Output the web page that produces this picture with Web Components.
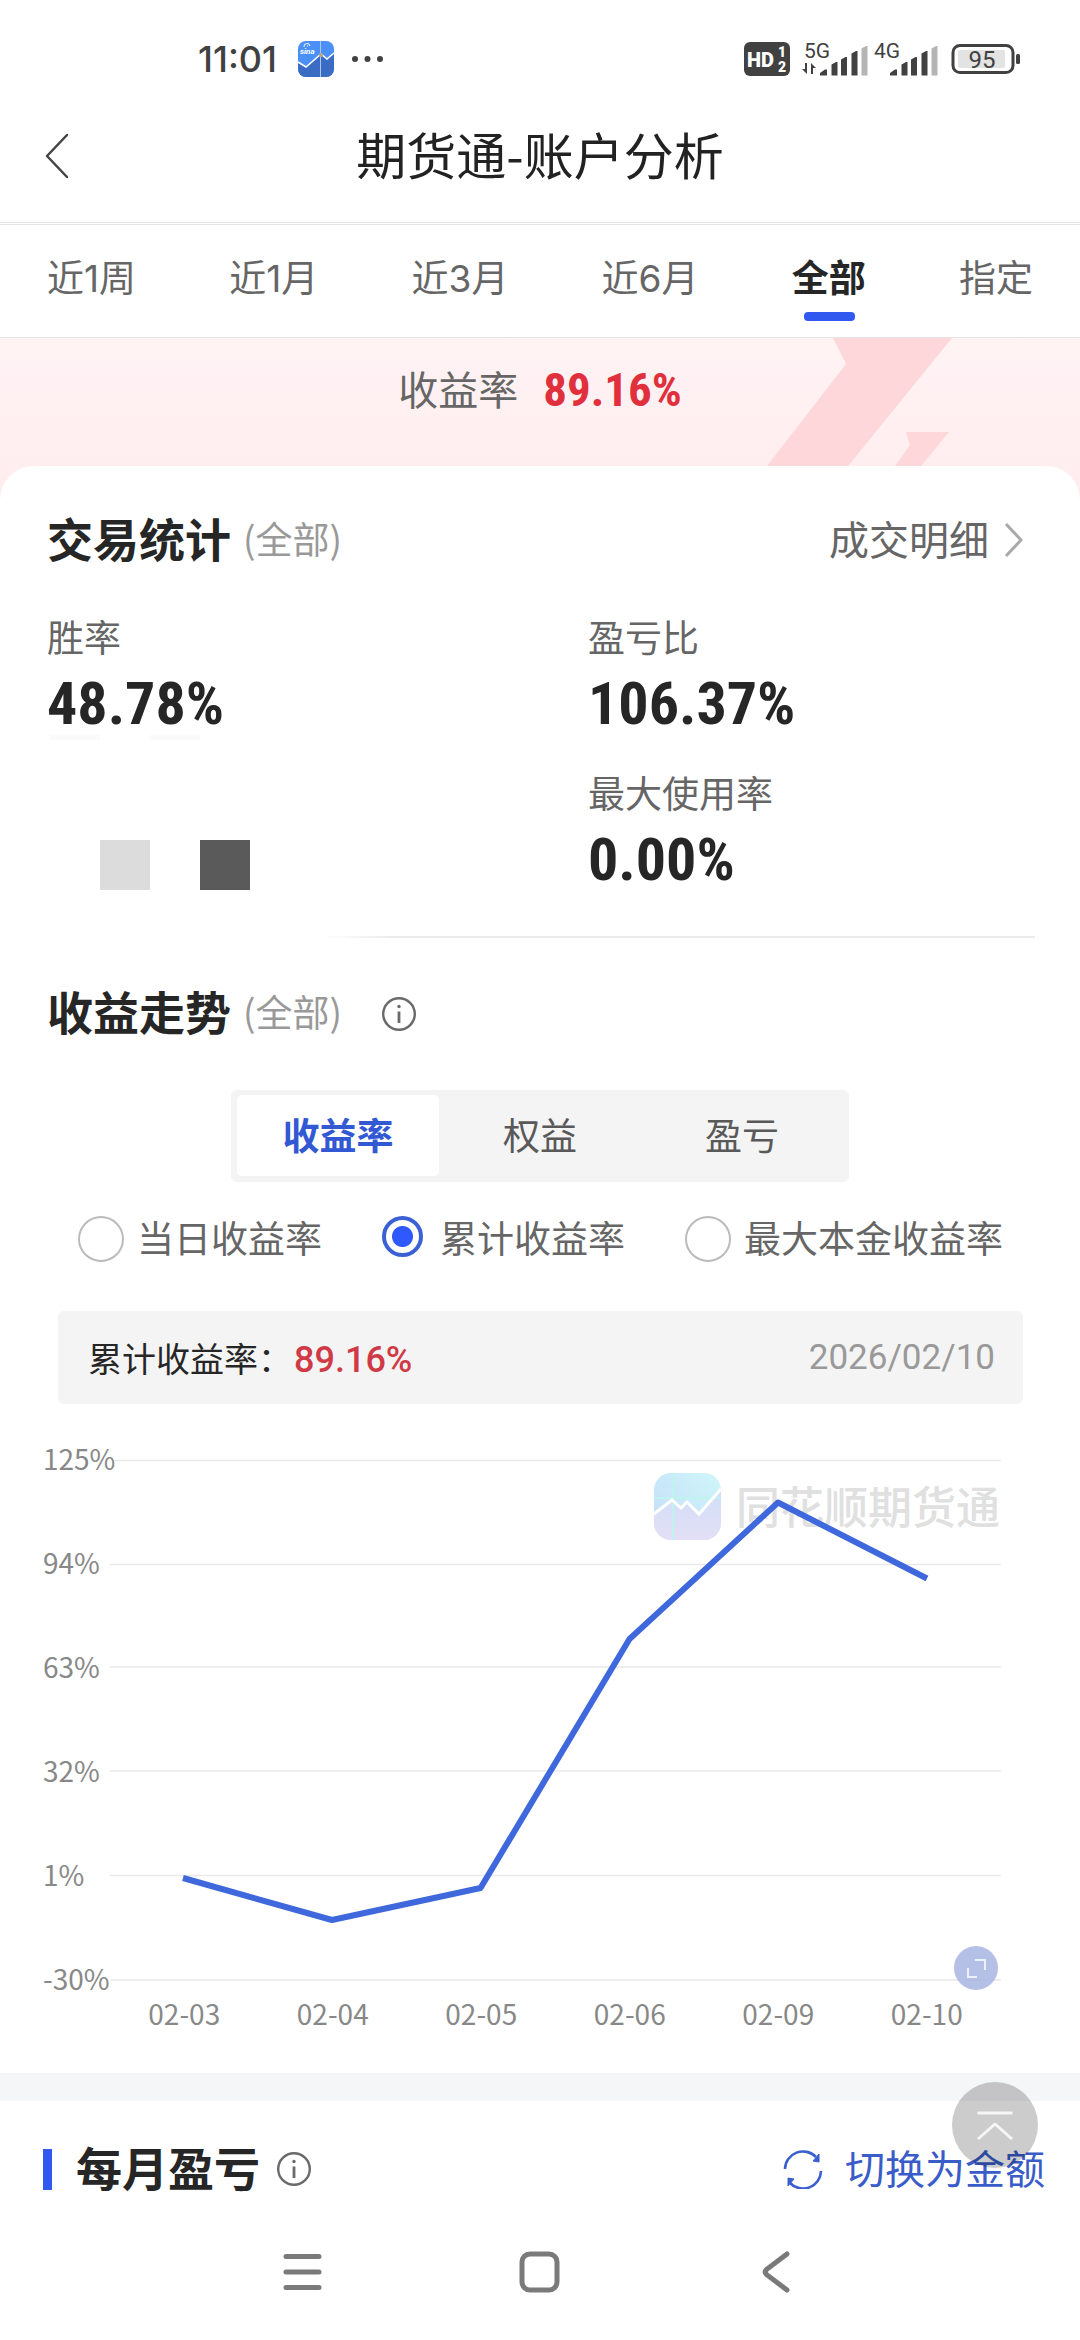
<!DOCTYPE html>
<html lang="zh-CN">
<head>
<meta charset="utf-8">
<meta name="viewport" content="width=device-width, initial-scale=1">
<title>期货通-账户分析</title>
<style>
  html, body { margin: 0; }
  body {
    min-height: 100vh; display: flex; flex-direction: column; background: #fff; color: #262626;
    font-family: "Noto Sans CJK SC", "Noto Sans", sans-serif;
    --num: "Roboto Condensed", "Liberation Sans Narrow", Roboto, sans-serif;
    --mix: Inter, "Noto Sans CJK SC", sans-serif;
    --blue: #3159f0; --grey: #666; --light: #999; --pad: 47px;
  }
  nav-keys { margin-top: auto; }
</style>
</head>
<body>
<status-bar time="11:01" battery="95"></status-bar>
<page-header>期货通-账户分析</page-header>
<range-tabs items="近1周,近1月,近3月,近6月,全部,指定" active="全部"></range-tabs>
<return-banner value="89.16%">收益率</return-banner>
<content-card>
  <section-title note="(全部)">交易统计<more-link slot="end">成交明细</more-link></section-title>
  <stat-grid>
    <stat-item label="胜率" value="48.78%"></stat-item>
    <stat-item label="盈亏比" value="106.37%"></stat-item>
    <masked-stat></masked-stat>
    <stat-item label="最大使用率" value="0.00%"></stat-item>
  </stat-grid>
  <fade-rule></fade-rule>
  <section-title note="(全部)">收益走势<info-button slot="after"></info-button></section-title>
  <segment-control items="收益率,权益,盈亏" active="收益率"></segment-control>
  <radio-row items="当日收益率,累计收益率,最大本金收益率" active="累计收益率"></radio-row>
  <point-summary value="89.16%" date="2026/02/10">累计收益率：</point-summary>
  <trend-chart></trend-chart>
</content-card>
<month-section></month-section>
<nav-keys></nav-keys>

<script>
const define = (name, render) => customElements.define(name, class extends HTMLElement {
  constructor() { super(); this.attachShadow({ mode: 'open' }); }
  connectedCallback() { this.shadowRoot.innerHTML = render(this); }
});
const at = (el, n) => el.getAttribute(n) || '';
const RESET = `button{font:inherit;color:inherit;background:none;border:0;padding:0;margin:0;display:block}
a{color:inherit;text-decoration:none} svg{display:block} h1,h2,p,dl,dd,dt{margin:0;font:inherit}`;

const bars = x => `<g transform="translate(${x} 0)" fill="#414141">
<path d="M0 34.500v-2.500l5-3.500h2v6z M11.500 34.500v-11l4.500-2.500h1.500v13.500z M21 34.500v-16l4.500-2.500h1.500v18.500z M31.500 34.500v-22l4.500-2.500h1.500v24.500z"/>
<path fill="#b5b5b5" d="M41.500 34.500v-27l4.500-2.500h1.500v29.500z"/></g>`;

define('status-bar', el => `<style>${RESET}
:host{display:block;padding-top:28px;color:#414141}
.row{height:62px;display:flex;align-items:center;justify-content:space-between;padding:0 59px 0 198px}
.side{display:flex;align-items:center}
time{font:500 36px/40px var(--mix);width:100px}
.app{margin-right:16px}
.hd{margin-right:12px}
.sig{margin-right:10px}
</style><div class="row">
<div class="side"><time>${at(el, 'time')}</time>
<svg class="app" width="36" height="36" viewBox="0 0 36 36"><defs><clipPath id="c"><rect width="36" height="36" rx="8"/></clipPath></defs>
<g clip-path="url(#c)"><rect width="36" height="36" fill="#4a90f7"/><path d="M0 22l8 4 15-12 6 4 7-6v24H0z" fill="#3a6cc4"/>
<path d="M0 21l8 5 15-13 6 5 7-6" fill="none" stroke="#fff" stroke-width="1.600"/><path d="M22.500 0v36" stroke="#a8c8f4" stroke-width="1"/>
<circle cx="23" cy="14" r="2" fill="#b9a48a"/><text x="2" y="13" font-family="Roboto" font-size="8" font-style="italic" font-weight="700" fill="#fff">sina</text>
<path d="M6 6a3 3 0 0 1 6-1M9 5h1" fill="none" stroke="#fff"/></g></svg>
<svg width="34" height="8" viewBox="0 0 34 8" fill="#414141"><circle cx="5" cy="4" r="3"/><circle cx="17.500" cy="4" r="3"/><circle cx="30" cy="4" r="3"/></svg></div>
<div class="side">
<svg class="hd" width="46" height="34" viewBox="0 0 46 34" font-family="Roboto" font-weight="900" fill="#fff"><rect width="46" height="34" rx="6" fill="#414141"/>
<text x="3" y="25" font-size="20">HD</text><text x="34" y="15" font-size="14">1</text><text x="34" y="30" font-size="14">2</text></svg>
<svg class="sig" width="138" height="48" viewBox="0 -6 138 48" font-family="Roboto" font-size="21" fill="#414141">
<text x="2" y="17">5G</text><text x="72" y="17">4G</text>${bars(18)}${bars(88)}
<path d="M5 22v11l-5-5h3v-6zM9 33V22l5 5h-3v6z"/></svg>
<svg width="71" height="40" viewBox="0 -4 71 40"><rect x="3" y="2.500" width="60" height="27" rx="7" fill="none" stroke="#414141" stroke-width="3"/>
<rect x="8" y="7" width="47" height="18" rx="2" fill="#e3e3e3"/><rect x="66" y="11" width="4" height="10" rx="1.500" fill="#414141"/>
<text x="32" y="24.500" font-family="Roboto" font-size="24" fill="#414141" text-anchor="middle">${at(el, 'battery')}</text></svg>
</div></div>`);

define('page-header', () => `<style>${RESET}
:host{display:grid;grid-template-columns:1fr auto 1fr;align-items:center;height:132px;border-bottom:3px double #e4e4e4;color:#222}
button{margin-left:44px;width:44px;height:60px} h1{font-size:50px;line-height:60px;padding-bottom:6px}
</style><button aria-label="返回"><svg width="26" height="60" viewBox="0 0 26 60" fill="none" stroke="#444" stroke-width="2.500" stroke-linecap="round" stroke-linejoin="round"><path d="M23 9L3 30l20 21"/></svg></button><h1><slot></slot></h1>`);

define('range-tabs', el => `<style>${RESET}
:host{display:flex;justify-content:space-between;padding:0 var(--pad);border-bottom:1px solid #e9e4e4}
button{position:relative;height:112px;padding-bottom:4px;font:400 37px/48px var(--mix);color:var(--grey)}
.on{color:#262626;font-weight:700}
.on::after{content:"";position:absolute;left:50%;bottom:16px;width:51px;height:9px;margin-left:-25px;border-radius:4px;background:var(--blue)}
</style>${at(el, 'items').split(',').map(t => `<button class="${t === at(el, 'active') ? 'on' : ''}">${t}</button>`).join('')}`);

define('return-banner', el => `<style>${RESET}
:host{display:block;position:relative;height:162px;background:linear-gradient(#fff3f4,#ffecee)}
.art{position:absolute;right:128px;top:0}
p{position:relative;display:flex;justify-content:center;align-items:center;gap:25px;padding-top:18px;font-size:40px;line-height:60px;color:var(--grey)}
b{font:700 47px/60px var(--num);padding-top:4px;color:#e0303e}
</style><svg class="art" width="185" height="128" viewBox="0 0 185 128" fill="#fdd7d9"><path d="M66 0h119L81 128H0L79 26z"/><path d="M139 94h43l-28 34h-26l15-21z"/></svg>
<p><slot></slot><b>${at(el, 'value')}</b></p>`);

define('content-card', () => `<style>:host{display:block;position:relative;margin-top:-34px;padding:44px 0 38px;border-radius:34px 34px 0 0;background:#fff}</style><slot></slot>`);

define('section-title', el => `<style>${RESET}
:host{display:flex;align-items:center;padding:0 var(--pad);height:60px;line-height:54px}
h2{font-size:46px;font-weight:700;padding-bottom:6px}
span{font-size:37px;color:var(--light);margin-left:12px;padding-bottom:4px}
.end{margin-left:auto}
</style><h2><slot></slot></h2><span>${at(el, 'note')}</span><slot name="after"></slot><div class="end"><slot name="end"></slot></div>`);

define('more-link', () => `<style>${RESET}
a{display:flex;align-items:center;gap:15px;font-size:40px;line-height:60px;font-weight:400;color:var(--grey);margin-right:9px}
span{padding-bottom:4px}
</style><a href="#"><span><slot></slot></span><svg width="20" height="36" viewBox="0 0 20 36" fill="none" stroke="#aaa" stroke-width="3"><path d="M2 2l15 16L2 34"/></svg></a>`);

const infoIcon = `<svg width="36" height="36" viewBox="0 0 36 36" fill="none" stroke="#6a6a6a" stroke-width="2.400"><circle cx="18" cy="18" r="15.800"/><path d="M18 15.500v11.500" stroke-width="2.800"/><circle cx="18" cy="10.500" r="1.700" fill="#6a6a6a" stroke="none"/></svg>`;
define('info-button', () => `<style>${RESET} :host{display:block;margin-left:39px;padding-top:2px}</style><button aria-label="说明">${infoIcon}</button>`);

define('stat-grid', () => `<style>:host{display:grid;grid-template-columns:541px 1fr;row-gap:37px;padding:44px var(--pad) 0}</style><slot></slot>`);
define('stat-item', el => `<style>${RESET} :host{display:block}
dt{font-size:37px;line-height:44px;color:var(--grey);margin-bottom:16px} dd{font:700 60px/59px var(--num)}
</style><dl><dt>${at(el, 'label')}</dt><dd>${at(el, 'value')}</dd></dl>`);
define('masked-stat', () => `<style>${RESET} :host{display:block;margin:-35px 0 0 3px}</style>
<svg width="200" height="155" viewBox="0 0 200 155"><path d="M0 0h50v5H0zM100 0h50v5h-50z" fill="#fafafa"/><path d="M50 105h50v50H50z" fill="#dcdcdc"/><path d="M150 105h50v50h-50z" fill="#5a5a5a"/></svg>`);
define('fade-rule', () => `<style>:host{display:block;height:2px;margin:46px 45px 45px;background:linear-gradient(90deg,#fff 28%,#ebebeb 35%)}</style>`);

define('segment-control', el => `<style>${RESET}
:host{display:flex;width:606px;margin:47px auto 0;padding:5px 6px 6px;border-radius:6px;background:#f4f4f4}
button{flex:1;height:81px;padding-bottom:3px;border-radius:5px;font-size:37px;line-height:48px;color:#595959}
.on{background:#fff;color:#3358d4;font-weight:700}
</style>${at(el, 'items').split(',').map(t => `<button class="${t === at(el, 'active') ? 'on' : ''}">${t}</button>`).join('')}`);

define('radio-row', el => `<style>
:host{display:flex;justify-content:space-between;padding:34px 77px 0 78px}
label{display:flex;align-items:center;gap:13px;font-size:37px;line-height:42px;color:var(--grey)}
span{padding-bottom:4px}
input{appearance:none;box-sizing:border-box;width:46px;height:46px;margin:0;border:2px solid #bbb;border-radius:50%}
input:checked{width:41px;height:41px;margin:0 4px 5px 0;border:4px solid #3a60d6;background:radial-gradient(circle,#2f59ff 10px,#fff 11px)}
</style>${at(el, 'items').split(',').map(t => `<label><input type="radio" name="m" ${t === at(el, 'active') ? 'checked' : ''}><span>${t}</span></label>`).join('')}`);

define('point-summary', el => `<style>
:host{display:flex;align-items:center;height:93px;margin:49px 57px 0 58px;padding:0 28px 0 30px;border-radius:6px;background:#f4f4f4;font-size:34px;line-height:48px}
b{font:500 36px/48px Roboto,sans-serif;padding:4px 0 0 2px;color:#cf3a46} time{margin-left:auto;font:400 35px/48px Roboto,sans-serif;color:var(--light)}
</style><slot></slot><b>${at(el, 'value')}</b><time>${at(el, 'date')}</time>`);

const Y = ['125%', '94%', '63%', '32%', '1%', '-30%'];
const X = ['02-03', '02-04', '02-05', '02-06', '02-09', '02-10'];
define('trend-chart', () => `<style>${RESET}
:host{display:block;position:relative;margin:36px 79px 0 43px;font-size:28px;line-height:36px;color:#888}
.body{display:flex;height:560px}
.y{width:67px;display:flex;flex-direction:column;justify-content:space-between;position:relative;z-index:1}
.y span{align-self:flex-start;background:#fff;padding-bottom:4px}
.plot{flex:1;position:relative;padding:20px 0}
.plot>svg{width:100%;height:520px;overflow:visible;position:relative}
.x{display:flex;margin:-5px 0 0 67px;padding-bottom:4px} .x span{flex:1;text-align:center}
.mark{position:absolute;right:1px;top:29px;display:flex;align-items:center;gap:15px;font-size:44px;line-height:66px;font-weight:500;color:#e0e0e0}
.mark svg{margin-top:4px}
button{position:absolute;right:3px;top:506px}
</style><div class="body"><div class="y">${Y.map(t => `<span>${t}</span>`).join('')}</div>
<div class="plot"><div class="mark"><svg width="67" height="67" viewBox="0 0 67 67"><defs><linearGradient id="a" x1="0" y1="1" x2="1" y2="0"><stop stop-color="#c4dbf8"/><stop offset="1" stop-color="#cff6fa"/></linearGradient><linearGradient id="b" x1="0" y1="0" x2="0" y2="1"><stop stop-color="#cfdff8"/><stop offset="1" stop-color="#e3dff6"/></linearGradient><clipPath id="k"><rect width="67" height="67" rx="17"/></clipPath></defs>
<g clip-path="url(#k)"><path fill="url(#a)" d="M0 0h67v67H0z"/><path fill="url(#b)" d="M0 41l19-14 8 8 6-6 12 13 22-26v51H0z"/><path d="M19 0v67M0 25h67" stroke="#bff3ee" stroke-width="2"/><path d="M0 41l18-14 9 8 6-6 12 12 22-25" fill="none" stroke="#fff" stroke-width="3"/></g></svg>同花顺期货通</div>
<svg viewBox="0 0 891 520" preserveAspectRatio="none"><path d="M0 .500h891M0 104.500h891M0 207h891M0 311h891M0 415.500h891M0 520h891" stroke="#e9e9e9" stroke-width="1.500"/>
<path d="M73 418L222 460 370.500 428 519.500 179 668 42.500 817 118.500" fill="none" stroke="#3e68dc" stroke-width="6" stroke-linejoin="round"/></svg></div></div>
<div class="x">${X.map(t => `<span>${t}</span>`).join('')}</div>
<button aria-label="全屏"><svg width="44" height="44" viewBox="0 0 44 44"><circle cx="22" cy="22" r="22" fill="#aab7e2" fill-opacity=".88"/><path d="M21 14h10v10M14 22v9h9" fill="none" stroke="#eef2ff" stroke-width="2"/></svg></button>`);

define('month-section', () => `<style>${RESET}
:host{display:block;position:relative;border-top:28px solid #f5f6f8;padding:38px 35px 0 43px}
.row{display:flex;align-items:center;height:60px;line-height:54px}
.row::before{content:"";width:9px;height:41px;margin-right:24px;background:var(--blue)}
h2{font-size:46px;font-weight:700;margin-right:16px;padding-bottom:6px}
a{margin-left:auto;display:flex;align-items:center;gap:22px;font-size:40px;color:#3a5cc8}
a span{padding-bottom:5px}
.top{position:absolute;right:42px;top:-19px}
</style><div class="row"><h2>每月盈亏</h2><button aria-label="说明">${infoIcon}</button>
<a href="#"><svg width="40" height="40" viewBox="0 0 40 40" fill="none" stroke="#3a5fd0" stroke-width="2.600"><path d="M2 20A18 18 0 0 1 33 8M38 22A18 18 0 0 1 7 34"/><path d="M36 5v8l-6-1zM5 37v-8l6 1z" fill="#3a5fd0" stroke-width="1"/></svg><span>切换为金额</span></a></div>
<button class="top" aria-label="回到顶部"><svg width="86" height="86" viewBox="0 0 86 86"><circle cx="43" cy="43" r="43" fill="#000" fill-opacity=".2"/><path d="M25.500 31h35M26 57l17-15 17 15" fill="none" stroke="#f6f6f6" stroke-width="3" stroke-linejoin="round"/></svg></button>`);

define('nav-keys', () => `<style>${RESET} :host{display:flex;justify-content:center;align-items:center;gap:194px;height:136px}</style>
<button aria-label="最近任务"><svg width="44" height="44" viewBox="0 0 44 44" stroke="#7a7a7a" stroke-width="5" stroke-linecap="round"><path d="M6 6.500h33M6 22h33M6 37.500h33"/></svg></button>
<button aria-label="主页"><svg width="44" height="44" viewBox="0 0 44 44" fill="none" stroke="#7a7a7a" stroke-width="5"><rect x="4" y="4" width="35" height="36" rx="8"/></svg></button>
<button aria-label="返回"><svg width="44" height="44" viewBox="0 0 44 44" fill="none" stroke="#7a7a7a" stroke-width="5" stroke-linecap="round" stroke-linejoin="round"><path d="M31 4L10.500 19.500q-2.500 2.500 0 5L31 40"/></svg></button>`);
</script>
</body>
</html>
